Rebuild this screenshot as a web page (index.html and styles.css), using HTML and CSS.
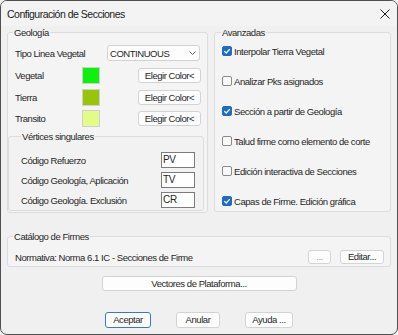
FILE: index.html
```html
<!DOCTYPE html>
<html lang="es">
<head>
<meta charset="utf-8">
<title>Configuración de Secciones</title>
<link rel="stylesheet" href="styles.css">
</head>
<body>
<div class="dialog">
  <div class="titlebar">
    <span class="title">Configuración de Secciones</span>
    <svg class="close" width="10" height="10" viewBox="0 0 10 10"><path d="M0.5 0.5 L9.5 9.5 M9.5 0.5 L0.5 9.5" stroke="#1a1a1a" stroke-width="1" fill="none"/></svg>
  </div>
  <div class="content">
    <div class="top">
      <fieldset class="group geo">
        <legend>Geología</legend>
        <div class="row tipo">
          <span class="lbl lbl-tipo">Tipo Linea Vegetal</span>
          <div class="combo"><span>CONTINUOUS</span><svg class="chev" width="7" height="4" viewBox="0 0 7 4"><path d="M0.5 0.5 L3.5 3.5 L6.5 0.5" stroke="#5a5a5a" stroke-width="1" fill="none"/></svg></div>
        </div>
        <div class="row color">
          <span class="lbl lbl-col">Vegetal</span><span class="swatch sw-veg"></span><button class="btn color-btn">Elegir Color&lt;</button>
        </div>
        <div class="row color">
          <span class="lbl lbl-col">Tierra</span><span class="swatch sw-tierra"></span><button class="btn color-btn">Elegir Color&lt;</button>
        </div>
        <div class="row color last">
          <span class="lbl lbl-col">Transito</span><span class="swatch sw-transito"></span><button class="btn color-btn">Elegir Color&lt;</button>
        </div>
        <fieldset class="group vert">
          <legend>Vértices singulares</legend>
          <div class="row code"><span class="lbl">Código Refuerzo</span><span class="input">PV</span></div>
          <div class="row code"><span class="lbl">Código Geología, Aplicación</span><span class="input">TV</span></div>
          <div class="row code"><span class="lbl">Código Geología. Exclusión</span><span class="input">CR</span></div>
        </fieldset>
      </fieldset>
      <fieldset class="group adv">
        <legend>Avanzadas</legend>
        <div class="check"><span class="box on"><svg width="10" height="10" viewBox="0 0 10 10"><path d="M2.3 5.1 L4.2 7 L7.8 3.1" stroke="#fff" stroke-width="1.3" fill="none"/></svg></span>Interpolar Tierra Vegetal</div>
        <div class="check"><span class="box"></span>Analizar Pks asignados</div>
        <div class="check"><span class="box on"><svg width="10" height="10" viewBox="0 0 10 10"><path d="M2.3 5.1 L4.2 7 L7.8 3.1" stroke="#fff" stroke-width="1.3" fill="none"/></svg></span>Sección a partir de Geología</div>
        <div class="check"><span class="box"></span>Talud firme como elemento de corte</div>
        <div class="check"><span class="box"></span>Edición interactiva de Secciones</div>
        <div class="check"><span class="box on"><svg width="10" height="10" viewBox="0 0 10 10"><path d="M2.3 5.1 L4.2 7 L7.8 3.1" stroke="#fff" stroke-width="1.3" fill="none"/></svg></span>Capas de Firme. Edición gráfica</div>
      </fieldset>
    </div>
    <fieldset class="group cat">
      <legend>Catálogo de Firmes</legend>
      <div class="row cat-row">
        <span class="lbl">Normativa: Norma 6.1 IC - Secciones de Firme</span>
        <button class="btn small dots">...</button>
        <button class="btn small edit">Editar...</button>
      </div>
    </fieldset>
    <button class="btn vec">Vectores de Plataforma...</button>
    <div class="actions">
      <button class="btn act default w-acep">Aceptar</button>
      <button class="btn act w-anul">Anular</button>
      <button class="btn act w-ayu">Ayuda ...</button>
    </div>
  </div>
</div>
</body>
</html>
```
FILE: styles.css
```css
* { box-sizing: border-box; }
html, body { margin: 0; padding: 0; }
body {
  width: 398px;
  height: 335px;
  overflow: hidden;
  background: #f0f0f0;
  font-family: "Liberation Sans", Arial, sans-serif;
  font-size: 9.5px;
  letter-spacing: -0.45px;
  color: #262626;
}
.dialog {
  width: 398px;
  height: 335px;
  border: 1px solid #4f4f4f;
  border-radius: 7px;
  background: #f0f0f0;
  display: flex;
  flex-direction: column;
  overflow: hidden;
}
.titlebar {
  height: 25px;
  flex: none;
  display: flex;
  align-items: center;
  justify-content: space-between;
  padding: 0 7px 0 6px;
  background: #f3f3f3;
}
.title { font-size: 10.5px; letter-spacing: -0.5px; color: #1a1a1a; }
.close { display: block; }
.content {
  padding: 0 6px;
  display: flex;
  flex-direction: column;
}
.top {
  display: grid;
  grid-template-columns: 201px 177px;
  column-gap: 6px;
  align-items: start;
}
fieldset.group {
  margin: 0;
  padding: 0;
  min-width: 0;
  border: 1px solid #dcdcdc;
  border-radius: 3px;
  background: #f4f4f4;
}
legend {
  padding: 0 1px;
  height: 13px;
  line-height: 13px;
  font-size: 9.5px;
  color: #262626;
}
fieldset.geo { padding: 3px 0 0 0; }
.geo > legend { margin-left: 5px; }
.row {
  display: flex;
  align-items: center;
}
.geo > .row { height: 22px; padding: 0 6px 0 7px; }
.geo > .row.last { height: 20px; }
.lbl { white-space: nowrap; }
.lbl-tipo { width: 92px; flex: none; }
.lbl-col { width: 67px; flex: none; }
.combo {
  width: 93px;
  height: 16px;
  border: 1px solid #d2d2d2;
  border-radius: 3px;
  background: #fdfdfd;
  display: flex;
  align-items: center;
  justify-content: space-between;
  padding: 0 3px 0 2px;
}
.chev { display: block; }
.swatch {
  width: 18px;
  height: 17px;
  flex: none;
  border: 1px solid #cfcfcf;
}
.sw-veg { background: #0ef10e; }
.sw-tierra { background: #98c40a; }
.sw-transito { background: #e2fc86; }
.btn {
  font-family: inherit;
  font-size: 9.5px;
  letter-spacing: -0.45px;
  color: #262626;
  background: #fdfdfd;
  border: 1px solid #d3d3d3;
  border-radius: 3px;
  padding: 0;
  margin: 0;
  height: 15px;
  line-height: 13px;
  white-space: nowrap;
}
.color-btn { width: 63px; margin-left: auto; }
fieldset.vert {
  margin: 2px 3px 1px 0;
  padding: 7px 0 0 0;
  background: #f2f2f2;
}
.vert > legend { margin-left: 12px; }
.row.code { height: 20px; padding: 0 8px 0 12px; }
.input {
  margin-left: auto;
  width: 34px;
  height: 16px;
  background: #fff;
  border: 1px solid #7c7c7c;
  padding-left: 1px;
  line-height: 14px;
  font-size: 10px;
  letter-spacing: -0.3px;
}
fieldset.adv {
  padding: 2px 0 0 7px;
  display: flex;
  flex-direction: column;
  row-gap: 10px;
}
.adv > legend { margin-left: -1px; }
.check {
  height: 20px;
  display: flex;
  align-items: center;
  white-space: nowrap;
}
.box {
  width: 10px;
  height: 10px;
  flex: none;
  margin-right: 2px;
  border: 1px solid #8a8a8a;
  border-radius: 2px;
  background: #f9f9f9;
  position: relative;
}
.box.on {
  border-color: #1f6cc2;
  background: #1f6cc2;
}
.box.on svg { position: absolute; left: -1px; top: -1px; }
fieldset.cat {
  margin-top: 17px;
  padding: 6px 6px 1px 7px;
}
.cat > legend { margin-left: -2px; }
.cat-row { height: 16px; }
.small { height: 14px; line-height: 12px; }
.dots { width: 23px; margin-left: auto; color: #9a9a9a; }
.edit { width: 44px; margin-left: 9px; }
.vec {
  align-self: center;
  width: 195px;
  margin-top: 9px;
}
.actions {
  margin-top: 21px;
  display: flex;
  justify-content: center;
  column-gap: 25px;
}
.act { height: 16px; line-height: 14px; }
.default { border-color: #3a78c0; }
.w-acep { width: 46px; }
.w-anul { width: 44px; }
.w-ayu { width: 48px; }
```
